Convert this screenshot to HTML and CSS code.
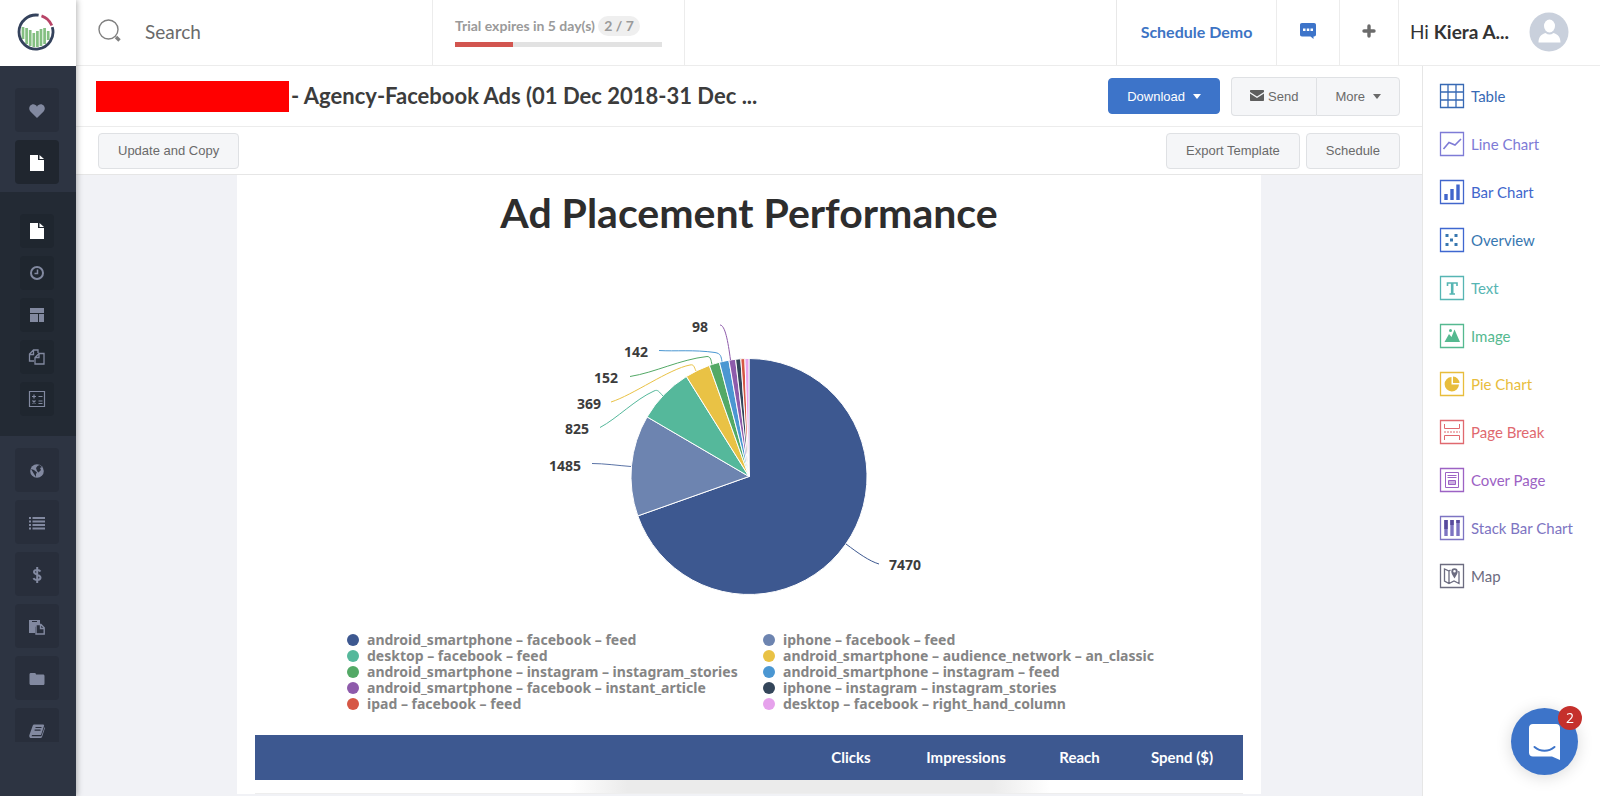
FILE: index.html
```html
<!DOCTYPE html>
<html lang="en">
<head>
<meta charset="utf-8">
<title>Agency-Facebook Ads</title>
<link rel="stylesheet" href="styles.css">
</head>
<body>
<div class="app">
  <nav class="sidebar" aria-label="Main">
    <a class="logo" href="#" aria-label="Home">
      <svg width="38" height="38" viewBox="0 0 38 38" fill="none">
        <g stroke="#84bf82" stroke-width="2.700"><path d="M6 14v12M9.600 15v16M13.200 17v16M16.800 20v14M20.400 18v16M24 16v17M27.600 15v16M31.200 18v9"/></g>
        <path d="M22.500 2.400A17 17 0 1 0 35.500 15" stroke="#34425c" stroke-width="2.800" transform="rotate(-3 19 19)"/>
        <path d="M24.500 2.800A17 17 0 0 1 34.800 12.500" stroke="#b84467" stroke-width="2.800"/>
      </svg>
    </a>
    <div class="nav-group nav-top">
      <a class="nav-btn" href="#" aria-label="Favorites"><svg width="16" height="16" viewBox="0 0 16 16"><path fill="currentColor" d="M8 15 1.400 8.400C-.6 6.300 0 2.700 2.600 1.700 4.800.8 7 1.800 8 3.700c1-1.900 3.200-2.900 5.400-2 2.600 1 3.200 4.600 1.200 6.700Z"/></svg></a>
      <a class="nav-btn active" href="#" aria-label="Reports"><svg width="16" height="18" viewBox="0 0 16 18"><path fill="currentColor" d="M1 1h8v5h6v11H1ZM10.500 1 15 5h-4.500Z"/></svg></a>
    </div>
    <div class="nav-group nav-sub">
      <a class="nav-btn small active" href="#" aria-label="Report list"><svg width="16" height="18" viewBox="0 0 16 18"><path fill="currentColor" d="M1 1h8v5h6v11H1ZM10.500 1 15 5h-4.500Z"/></svg></a>
      <a class="nav-btn small" href="#" aria-label="Scheduled"><svg width="16" height="16" viewBox="0 0 16 16" fill="none" stroke="currentColor" stroke-width="2"><circle cx="8" cy="8" r="6"/><path stroke-width="1.500" d="M8.500 4.500v4H5.500"/></svg></a>
      <a class="nav-btn small" href="#" aria-label="Templates"><svg width="16" height="16" viewBox="0 0 16 16"><path fill="currentColor" d="M1 1h14v5H1ZM1 7h8v8H1ZM10 7h5v8h-5Z"/></svg></a>
      <a class="nav-btn small" href="#" aria-label="Copies"><svg width="18" height="18" viewBox="0 0 18 18" fill="none" stroke="currentColor" stroke-width="1.300"><path d="M6 13H1.500V6L5.500 2H10v3M1.500 6.500h4V2M11 5.500 7 9.500V16h9V5.500ZM7 9.500h4v-4"/></svg></a>
      <a class="nav-btn small" href="#" aria-label="Calculator"><svg width="18" height="18" viewBox="0 0 18 18" fill="none" stroke="currentColor" stroke-width="1.200"><path d="M1.500 1.500h15v15h-15ZM4 6.500h4M6 4.500v4M10.500 6.500h4M4.500 10.500l3 3M7.500 10.500l-3 3M10.500 11h4M10.500 13.500h4"/></svg></a>
    </div>
    <div class="nav-group nav-bottom">
      <a class="nav-btn" href="#" aria-label="Web"><svg width="16" height="16" viewBox="0 0 16 16"><circle cx="8" cy="8" r="6.800" fill="currentColor"/><path fill="#282e3b" d="m8.500 3 2-1 2.500 2-2 1 1 2-2.500 2.500L8 8l-1-3ZM2 6l3 1 3 2.500-1 1.500v3L5 11Z"/></svg></a>
      <a class="nav-btn" href="#" aria-label="List"><svg width="16" height="16" viewBox="0 0 16 16" fill="none" stroke="currentColor" stroke-width="2.200"><path d="M0 3h2M3.500 3H16M0 6.500h2M3.500 6.500H16M0 10h2M3.500 10H16M0 13.500h2M3.500 13.500H16"/></svg></a>
      <a class="nav-btn" href="#" aria-label="Billing"><svg width="16" height="18" viewBox="0 0 16 18" fill="none" stroke="currentColor" stroke-width="2"><path d="M11.500 5.500C10.500 3.800 5 3 5 6c0 3 6.500 2.400 6.500 5.500 0 3.300-6 2.800-7 .6M8.200 1v16"/></svg></a>
      <a class="nav-btn" href="#" aria-label="Clipboard"><svg width="18" height="18" viewBox="0 0 18 18"><path fill="currentColor" d="M1 2h11v4L7 9v6H1Z"/><path stroke="#282e3b" d="M4 3.500h5"/><path fill="#282e3b" stroke="currentColor" stroke-width="1.400" d="M8 6.500h5l3.200 3.200V16H8ZM12.500 6.500v4h3.700"/></svg></a>
      <a class="nav-btn" href="#" aria-label="Folders"><svg width="16" height="16" viewBox="0 0 16 16"><path fill="currentColor" d="M.5 3.500c0-1 .6-1.500 1.500-1.500h3.500C6.500 2 7 2.600 7 3.500h7c1 0 1.500.6 1.500 1.500v7.500c0 1-.6 1.500-1.500 1.500H2c-1 0-1.500-.6-1.500-1.500Z"/></svg></a>
      <a class="nav-btn clipped" href="#" aria-label="Guides"><svg width="16" height="16" viewBox="0 0 16 16"><path fill="currentColor" d="M5.500 1.500H14c1 0 1.300.6 1 1.500l-3 9H3l-.4 1.200 9.800.1L15.600 4 16 5l-3 9c-.2.700-.7 1-1.500 1H2.300C.7 15-.1 13.600.4 12L3.700 2.800c.3-.9.900-1.300 1.800-1.300Z"/><path stroke="#282e3b" stroke-width="1.200" d="M6.500 4.500h6M5.600 7.200h6"/></svg></a>
    </div>
  </nav>

  <div class="content">
    <header class="topbar">
      <label class="search">
        <svg width="24" height="24" viewBox="0 0 24 24" fill="none" stroke="#808080"><circle cx="10.500" cy="10.500" r="9.500" stroke-width="1.400"/><path stroke-width="3.400" d="m18 18 3.500 3.500"/></svg>
        <input type="text" placeholder="Search" aria-label="Search">
      </label>
      <div class="trial">
        <div class="trial-text">Trial expires in 5 day(s) <span class="pill">2 / 7</span></div>
        <div class="bar"><div class="bar-fill" style="width:28%"></div></div>
      </div>
      <a class="demo" href="#">Schedule Demo</a>
      <button class="icon-cell messages" aria-label="Messages"><svg width="16" height="16" viewBox="0 0 16 16"><path fill="#3d74c9" d="M2 0h12c1.300 0 2 .7 2 2v9.500c0 1.300-.7 2-2 2h-.5v2.500L10.500 13.500H2c-1.300 0-2-.7-2-2V2C0 .7.700 0 2 0Z"/><path fill="#fff" d="M3 5.500h2.500V8H3ZM6.800 5.500h2.500V8H6.800ZM10.500 5.500H13V8h-2.500Z"/></svg></button>
      <button class="icon-cell add" aria-label="Add"><svg width="14" height="14" viewBox="0 0 14 14" stroke="#6b6b6b" stroke-width="3.400" stroke-linecap="round"><path d="M7 2v10M2 7h10"/></svg></button>
      <div class="user">
        <span>Hi <b>Kiera A...</b></span>
        <svg width="40" height="40" viewBox="0 0 40 40"><circle cx="20" cy="20" r="19.500" fill="#c9d0dc"/><ellipse cx="20.500" cy="14" rx="5.500" ry="6.500" fill="#fff"/><path fill="#fff" d="M9.500 30.500c0-6 3-8 7-9.500q4 3 8 0c4 1.500 7 3.500 7 9.500Z"/></svg>
      </div>
    </header>

    <div class="workspace">
      <main class="main">
        <div class="title-row">
          <h2 class="report-title"><span class="redacted"></span><span class="title-text">- Agency-Facebook Ads (01 Dec 2018-31 Dec ...</span></h2>
          <button class="btn primary">Download <span class="caret"></span></button>
          <div class="btn-group">
            <button class="btn"><svg width="14" height="12" viewBox="0 0 14 12"><path fill="#5e5e5e" d="M1 0h12c.7 0 1 .4 1 1v1L7 6.500 0 2V1c0-.6.300-1 1-1ZM0 3.600 7 8l7-4.400V10c0 .7-.4 1-1 1H1c-.6 0-1-.3-1-1Z"/></svg>Send</button>
            <button class="btn">More <span class="caret"></span></button>
          </div>
        </div>
        <div class="tool-row">
          <button class="btn">Update and Copy</button>
          <span class="grow"></span>
          <button class="btn">Export Template</button>
          <button class="btn">Schedule</button>
        </div>
        <div class="canvas">
          <section class="page">
            <h1>Ad Placement Performance</h1>
            <svg class="pie" width="440" height="310" viewBox="529 300 440 310" role="img" aria-label="Clicks by ad placement">
              <g transform="translate(749 476.500)" stroke="#fff" stroke-linejoin="round">
                <path fill="#3d5890" d="M0 0V-118A118 118 0 1 1-111.200 39.400Z"/>
                <path fill="#6d84b0" d="M0 0-111.200 39.400A118 118 0 0 1-101.900-59.600Z"/>
                <path fill="#55b89b" d="M0 0-101.900-59.600A118 118 0 0 1-62.600-100Z"/>
                <path fill="#e9c245" d="M0 0-62.600-100A118 118 0 0 1-39.700-111.100Z"/>
                <path fill="#53a966" d="M0 0-39.700-111.100A118 118 0 0 1-29.600-114.200Z"/>
                <path fill="#4b97d2" d="M0 0-29.600-114.200A118 118 0 0 1-20.100-116.300Z"/>
                <path fill="#8e5bab" d="M0 0-20.100-116.300A118 118 0 0 1-13.400-117.200Z"/>
                <path fill="#34465a" d="M0 0-13.400-117.200A118 118 0 0 1-8.200-117.700Z"/>
                <path fill="#d65745" d="M0 0-8.200-117.700A118 118 0 0 1-4.100-117.900Z"/>
                <path fill="#e6a2ec" d="M0 0-4.100-117.900A118 118 0 0 1 0-118Z"/>
              </g>
              <g fill="none">
                <path stroke="#3d5890" d="M846 544c12 9 23 17 33 20"/>
                <path stroke="#5a73a6" d="M592 463.500c12 0 26 2 39 3"/>
                <path stroke="#55b89b" d="M600 427.500c17-9 35-28 54-36.500 4-2 5 1 9 5"/>
                <path stroke="#e9c245" d="M611 402c22-7 58-33 79-37 4-1 4 2 6 6"/>
                <path stroke="#53a966" d="M630 376.500c25-4 50-17 77-20 4 0 4 4 5 8"/>
                <path stroke="#4b97d2" d="M659 350.500c16 1 35-1 56 2 6 1 6 4 7 9"/>
                <path stroke="#8e5bab" d="M720 325c5 0 8 16 10.500 35"/>
              </g>
              <g class="pie-labels">
                <text x="889" y="570">7470</text>
                <g text-anchor="end">
                  <text x="581" y="471">1485</text>
                  <text x="589" y="434">825</text>
                  <text x="601" y="409">369</text>
                  <text x="618" y="383">152</text>
                  <text x="648" y="357">142</text>
                  <text x="708" y="332">98</text>
                </g>
              </g>
            </svg>
            <ul class="legend">
              <li class="c1">android_smartphone – facebook – feed</li>
              <li class="c2">iphone – facebook – feed</li>
              <li class="c3">desktop – facebook – feed</li>
              <li class="c4">android_smartphone – audience_network – an_classic</li>
              <li class="c5">android_smartphone – instagram – instagram_stories</li>
              <li class="c6">android_smartphone – instagram – feed</li>
              <li class="c7">android_smartphone – facebook – instant_article</li>
              <li class="c8">iphone – instagram – instagram_stories</li>
              <li class="c9">ipad – facebook – feed</li>
              <li class="c10">desktop – facebook – right_hand_column</li>
            </ul>
            <table class="data">
              <thead><tr><th class="name-col"></th><th class="clicks-col">Clicks</th><th class="impr-col">Impressions</th><th class="reach-col">Reach</th><th class="spend-col">Spend ($)</th></tr></thead>
            </table>
            <div class="page-end"></div>
          </section>
        </div>
      </main>

      <aside class="widgets">
        <a class="w-table" href="#"><svg width="26" height="26" viewBox="0 0 26 26"><path d="M1.500 1.500h23v23h-23ZM9 1.500v23M17 1.500v23M1.500 9h23M1.500 17h23"/></svg>Table</a>
        <a class="w-line" href="#"><svg width="26" height="26" viewBox="0 0 26 26"><path d="M1.500 1.500h23v23h-23Z"/><path stroke-width="1.600" d="m4.500 18 5.500-6.500 6 2.500 6-6"/></svg>Line Chart</a>
        <a class="w-bar" href="#"><svg width="26" height="26" viewBox="0 0 26 26"><path d="M1.500 1.500h23v23h-23Z"/><path stroke-width="3.400" d="M7 21v-6M13 21V10M19 21V5.500"/></svg>Bar Chart</a>
        <a class="w-over" href="#"><svg width="26" height="26" viewBox="0 0 26 26"><path stroke="#3f67d0" d="M1.500 1.500h23v23h-23Z"/><path stroke-width="3" d="M6.500 8.500h3M15.500 8.500h3M11 13h3M6.500 17.500h3M15.500 17.500h3"/></svg>Overview</a>
        <a class="w-text" href="#"><svg width="26" height="26" viewBox="0 0 26 26"><path d="M1.500 1.500h23v23h-23Z"/><path stroke-width="1.600" d="M8.500 11V8h9.500v3M10.500 19h5.500"/><path stroke-width="2.600" d="M13.200 8v11"/></svg>Text</a>
        <a class="w-image" href="#"><svg width="26" height="26" viewBox="0 0 26 26"><path d="M1.500 1.500h23v23h-23Z"/><path stroke="none" fill="currentColor" d="m5.500 19 4.500-8 2.500 3 3-7.500L21 19Z"/><circle cx="11.500" cy="7.500" r="1.500" stroke="none" fill="currentColor"/></svg>Image</a>
        <a class="w-pie" href="#"><svg width="26" height="26" viewBox="0 0 26 26"><path d="M1.500 1.500h23v23h-23Z"/><path stroke="none" fill="currentColor" d="M12.500 6v7.500h7.500A7.200 7.200 0 1 1 12.500 6ZM14 5.500a7 7 0 0 1 6.500 6.500H14Z"/></svg>Pie Chart</a>
        <a class="w-break" href="#"><svg width="26" height="26" viewBox="0 0 26 26"><path d="M1.500 1.500h23v23h-23Z"/><path stroke-width="1" d="M5.500 5v4.500h15V5M5.500 21v-4.500h15V21"/><path stroke-width="1" stroke-dasharray="2 1" d="M5 13h16"/></svg>Page Break</a>
        <a class="w-cover" href="#"><svg width="26" height="26" viewBox="0 0 26 26"><path d="M1.500 1.500h23v23h-23Z"/><path stroke-width="1" d="M6.500 5.500h13v15h-13ZM8.500 8.500h9M8.500 10.500h9"/><path fill="currentColor" fill-opacity=".5" stroke-width="1" d="M9.500 13.500h7v4h-7Z"/></svg>Cover Page</a>
        <a class="w-stack" href="#"><svg width="26" height="26" viewBox="0 0 26 26"><path d="M1.500 1.500h23v23h-23Z"/><path stroke-width="3.400" d="M7 21V5M13 21V5M19 21V5"/><path stroke="#584a9c" stroke-width="3.400" d="M7 14V5M13 10V5M19 8V5"/></svg>Stack Bar Chart</a>
        <a class="w-map" href="#"><svg width="26" height="26" viewBox="0 0 26 26"><path d="M1.500 1.500h23v23h-23Z"/><path stroke-width="1.300" d="M11.500 7 10 8 5.500 6v12l4.500 2.500 5-2.500 5 2.500V9l-1-.5M10 8v12.500"/><path fill="currentColor" stroke="none" fill-rule="evenodd" d="M15.500 15.500C13.500 12 12.300 10.300 12.300 8.400a3.200 3.200 0 0 1 6.400 0c0 1.900-1.200 3.600-3.200 7.100ZM15.500 7a1.300 1.300 0 1 0 0 2.600 1.300 1.300 0 0 0 0-2.600Z"/></svg>Map</a>
      </aside>
    </div>
  </div>
</div>
<button class="chat" aria-label="Open chat, 2 unread">
  <svg width="34" height="38" viewBox="0 0 34 38"><path fill="#fff" d="M5 1h23c2.500 0 4 1.500 4 4v32l-8-3.500H5c-2.500 0-4-1.500-4-4V5c0-2.500 1.500-4 4-4Z"/><path d="M6.500 24c6 5 14 5 20 0" fill="none" stroke="#3d74c9" stroke-width="2" stroke-linecap="round"/></svg>
  <span class="badge">2</span>
</button>
</body>
</html>
```
FILE: styles.css
```css
* { box-sizing: border-box; }
body { margin: 0; font-family: Lato, "Open Sans", sans-serif; color: #3c3c3c; background: #fff; }
a { text-decoration: none; }
button { font: inherit; cursor: pointer; }
.app { display: flex; height: 100vh; overflow: hidden; }

.sidebar { flex: 0 0 76px; background: #2d3442; color: #8289a0; box-shadow: 1px 0 6px rgba(0, 0, 0, .3); z-index: 1; }
.logo { display: flex; align-items: center; justify-content: center; height: 66px; padding: 0 4px 2px 0; background: #fff; }
.nav-group { display: flex; flex-direction: column; padding-left: 15px; gap: 8px; }
.nav-top { padding-top: 22px; padding-bottom: 8px; }
.nav-sub { padding: 22px 0 20px 20px; background: #232a34; }
.nav-bottom { padding-top: 12px; }
.nav-btn { display: flex; align-items: center; justify-content: center; width: 44px; height: 44px; padding-top: 2px; border-radius: 4px; background: #282e3b; color: inherit; }
.nav-btn.active { background: #20262f; color: #fff; }
.nav-btn.small { width: 34px; height: 34px; padding: 0; background: #1f262f; }
.nav-btn.clipped { height: 34px; padding-top: 12px; border-radius: 4px 4px 0 0; }

.content { flex: 1; min-width: 0; display: flex; flex-direction: column; }
.topbar { display: flex; flex: 0 0 66px; border-bottom: 1px solid #ececec; }
.search { display: flex; align-items: center; gap: 23px; width: 357px; padding: 0 0 3px 22px; border-right: 1px solid #ececec; }
.search input { width: 200px; padding: 0; border: 0; outline: 0; font: 19px Lato, sans-serif; background: none; }
.search input::placeholder { color: #6a6a6a; opacity: 1; }
.trial { width: 252px; padding: 16px 22px 0; border-right: 1px solid #ececec; font-size: 14px; font-weight: 700; line-height: 20px; color: #9a9a9a; white-space: nowrap; }
.pill { display: inline-block; padding: 0 6px; border-radius: 10px; background: #efefef; }
.bar { height: 5px; margin-top: 6px; background: #e2e2e2; }
.bar-fill { height: 100%; background: #d2554f; }
.demo { display: flex; align-items: center; justify-content: center; width: 160px; margin-left: auto; padding-bottom: 2px; border-left: 1px solid #e8e8e8; color: #3d74c4; font-size: 16px; font-weight: 700; }
.icon-cell { display: flex; align-items: center; justify-content: center; padding: 0 0 4px; border: 0; border-left: 1px solid #ececec; background: none; }
.messages { width: 63px; }
.add { width: 59px; }
.user { display: flex; align-items: center; justify-content: space-between; width: 202px; padding: 0 31px 2px 11px; border-left: 1px solid #ececec; font-size: 19px; color: #333; white-space: nowrap; }

.workspace { flex: 1; display: flex; min-height: 0; }
.main { flex: 1; min-width: 0; display: flex; flex-direction: column; }
.title-row { display: flex; align-items: center; flex: 0 0 61px; padding: 0 22px 0 20px; border-bottom: 1px solid #ececec; }
.report-title { display: flex; align-items: center; flex: 1; gap: 2px; margin: 0; font-size: 22px; white-space: nowrap; }
.title-text { padding-bottom: 2px; }
.redacted { width: 193px; height: 31px; background: #f00; }
.btn { display: flex; align-items: center; justify-content: center; height: 36px; padding: 0 19px; border: 1px solid #dfe1e4; border-radius: 4px; background: #f5f6f8; color: #6a6a6a; font: 13px "Liberation Sans", Arial, sans-serif; white-space: nowrap; }
.btn svg { margin-right: 4px; }
.primary { margin-right: 11px; padding: 0 18px; border-color: #3d74c9; background: #3d74c9; color: #fff; }
.caret { margin-left: 8px; border: 4px solid transparent; border-top: 5px solid currentColor; border-bottom: 0; }
.btn-group { display: flex; }
.btn-group .btn { height: 39px; padding: 0 18px; }
.btn-group .btn:first-child { border-right: 0; border-radius: 4px 0 0 4px; }
.btn-group .btn:last-child { border-radius: 0 4px 4px 0; }
.tool-row { display: flex; align-items: center; flex: 0 0 48px; gap: 6px; padding: 0 22px; border-bottom: 1px solid #e6e6e6; }
.grow { flex: 1; }

.canvas { flex: 1; min-height: 0; padding: 0 161px; background: #f1f2f6; overflow: hidden; }
.page { display: flex; flex-direction: column; padding: 0 18px; background: #fff; }
.page h1 { margin: 13px 0 0; font-size: 41px; line-height: 50px; text-align: center; color: #2d2d2d; }
.pie { align-self: center; margin-top: 62px; }
.pie-labels { font: 700 14px "Noto Sans", sans-serif; fill: #3c3c3c; }
.legend { display: grid; grid-template-columns: 416px auto; justify-content: start; margin: 22px 0 23px; padding: 0 0 0 92px; list-style: none; font: 700 14px/16px "Noto Sans", "Open Sans", sans-serif; color: #858585; white-space: nowrap; }
.legend li { display: flex; align-items: center; gap: 8px; }
.legend li::before { content: ""; width: 12px; height: 12px; border-radius: 50%; background: var(--dot); }
.c1 { --dot: #3d5890; } .c2 { --dot: #6d84b0; }
.c3 { --dot: #55b89b; } .c4 { --dot: #e9c245; }
.c5 { --dot: #53a966; } .c6 { --dot: #4b97d2; }
.c7 { --dot: #8e5bab; } .c8 { --dot: #34465a; }
.c9 { --dot: #d65745; } .c10 { --dot: #e6a2ec; }
.data { width: 100%; table-layout: fixed; border-collapse: collapse; background: #3d5890; color: #fff; font-size: 15px; }
.data th { height: 45px; padding: 0 0 2px; }
.clicks-col { width: 112px; }
.impr-col { width: 118px; }
.reach-col { width: 109px; }
.spend-col { width: 122px; }
.data th.clicks-col, .data th.impr-col, .data th.reach-col { padding-left: 26px; }
.page-end { height: 14px; border-bottom: 1px solid #eee; background: linear-gradient(90deg, transparent, #ebebeb 12%, #ebebeb 88%, transparent) 62% top / 480px 100% no-repeat; }

.widgets { display: flex; flex-direction: column; flex: 0 0 178px; gap: 22px; padding: 17px 0 0 16px; border-left: 1px solid #e6e6e6; font-size: 15px; white-space: nowrap; }
.widgets a { display: flex; align-items: center; gap: 6px; line-height: 24px; height: 26px; }
.widgets svg { flex: none; fill: none; stroke: currentColor; stroke-width: 1.3; }
.w-table { color: #3769b4; } .w-line { color: #7e7bd6; } .w-bar { color: #4166cc; } .w-over { color: #3777b0; }
.w-text { color: #56b5b3; } .w-image { color: #55b990; } .w-pie { color: #e8bd3c; } .w-break { color: #e0696f; }
.w-cover { color: #9c62c4; } .w-stack { color: #7d74c2; } .w-map { color: #6c6c80; }

.chat { position: fixed; right: 22px; bottom: 21px; z-index: 2; display: flex; align-items: center; justify-content: center; width: 67px; height: 67px; padding: 0; border: 0; border-radius: 50%; background: #3d74c9; box-shadow: 0 2px 16px rgba(0, 0, 0, .15); }
.badge { position: absolute; top: -2px; right: -4px; width: 24px; height: 24px; border-radius: 50%; background: #c5302c; color: #fff; font: 14px/24px "Open Sans", sans-serif; }
```
